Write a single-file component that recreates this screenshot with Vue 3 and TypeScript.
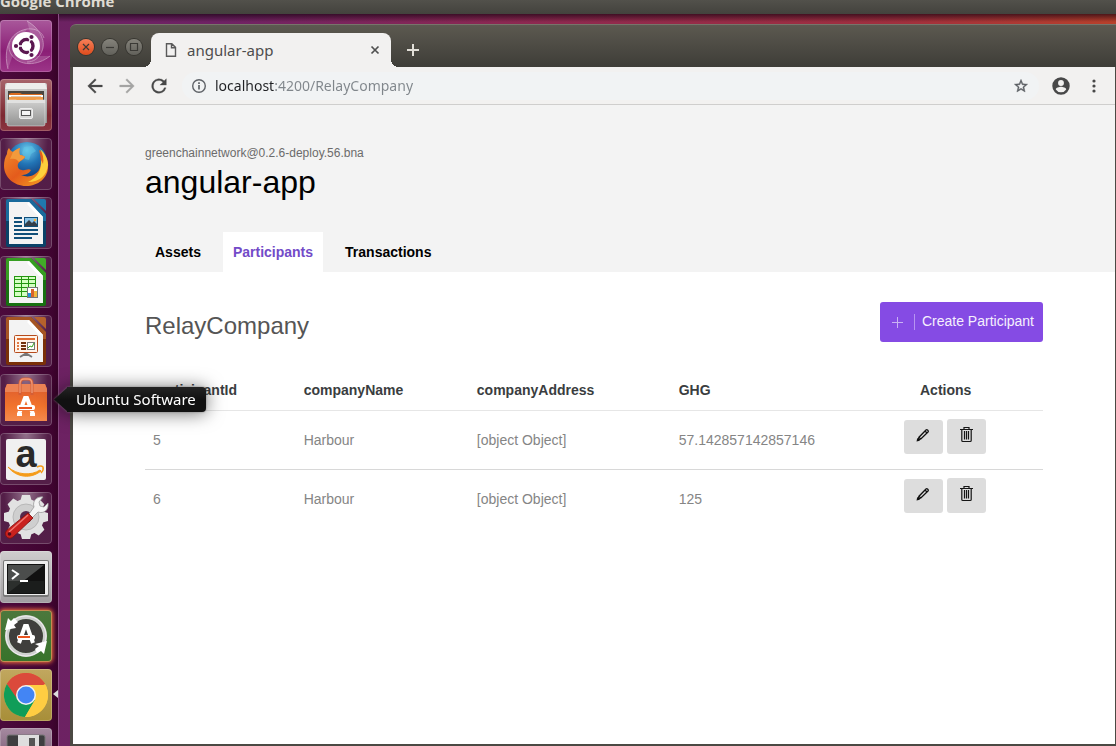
<script setup lang="ts">
import { ref } from 'vue'

interface Company {
  participantId: string
  companyName: string
  companyAddress: string
  ghg: string
}

const launchers = [
  { id: 'dash', label: 'Search your computer' },
  { id: 'files', label: 'Files' },
  { id: 'firefox', label: 'Firefox Web Browser' },
  { id: 'writer', label: 'LibreOffice Writer' },
  { id: 'calc', label: 'LibreOffice Calc' },
  { id: 'impress', label: 'LibreOffice Impress' },
  { id: 'software', label: 'Ubuntu Software' },
  { id: 'amazon', label: 'Amazon' },
  { id: 'settings', label: 'System Settings' },
  { id: 'terminal', label: 'Terminal' },
  { id: 'updater', label: 'Software Updater' },
  { id: 'chrome', label: 'Google Chrome' },
  { id: 'disk', label: 'Floppy Disk' },
]
const hovered = ref('software')
const address = ref('localhost:4200/RelayCompany')
const tabs = ['Assets', 'Participants', 'Transactions']
const activeTab = ref('Participants')
const companies = ref<Company[]>([
  { participantId: '5', companyName: 'Harbour', companyAddress: '[object Object]', ghg: '57.142857142857146' },
  { participantId: '6', companyName: 'Harbour', companyAddress: '[object Object]', ghg: '125' },
])
const documents: Record<string, [string, string]> = {
  writer: ['#1f78ae', '#0a4268'],
  calc: ['#41ad27', '#177010'],
  impress: ['#b5622c', '#7a3008'],
}
const teeth = [0, 45, 90, 135, 180, 225, 270, 315]
</script>

<template>
  <div class="desktop">
    <header class="panel">Google Chrome</header>
    <div class="workspace">
      <nav class="launcher" aria-label="Launcher">
        <div v-for="item in launchers" :key="item.id" class="slot">
          <button type="button" class="tile" :class="item.id" :aria-label="item.label">
            <svg viewBox="0 0 52 52" width="52" height="52" aria-hidden="true">
              <g v-if="item.id === 'dash'">
                <g fill="none" stroke="#fff" stroke-width="1" opacity=".35">
                  <path d="M8 49C3 30 9 12 27 9c9-1 15 3 17 9" />
                  <path d="M27 1c14 8 20 22 14 32-3 6-8 9-14 9" />
                  <path d="M50 36c-12 10-31 11-39-2-2-4-3-8-1-13" />
                </g>
                <path d="M8 49C3 30 9 12 27 9L16 26zM27 1c14 8 20 22 14 32L30 12zM50 36c-12 10-31 11-39-2l22 2z" fill="#fff" opacity=".16" />
                <circle cx="26" cy="26" r="14" fill="#fff" />
                <circle cx="26.500" cy="26" r="6.500" fill="none" stroke="#5b1750" stroke-width="3.400" />
                <path d="M26.500 26H15M26.500 26l6-10M26.500 26l6 10" stroke="#fff" stroke-width="1.400" />
                <g fill="#5b1750" stroke="#fff" stroke-width="1.200">
                  <circle cx="16" cy="26" r="2.700" /><circle cx="31.500" cy="17" r="2.700" /><circle cx="31.500" cy="35" r="2.700" />
                </g>
                <circle cx="26.500" cy="26" r="4.600" fill="#fff" />
              </g>

              <g v-else-if="item.id === 'files'">
                <path d="M5 6q0-2 2-2h38q2 0 2 2v38H5z" fill="url(#steel)" />
                <path d="M5 10l2-6h38l2 6z" fill="#ededeb" />
                <rect x="8" y="12" width="36" height="12" fill="#4b4640" />
                <path d="M9 15l2-1h9l2 1h20v3H9z" fill="#db6c20" />
                <rect x="9" y="16" width="34" height="2" fill="#fff" />
                <rect x="9" y="18" width="34" height="5" fill="#f19c4a" />
                <rect x="11" y="17" width="30" height="1" fill="#d8c8b8" />
                <path d="M7 21h9l3 2h14l3-2h9v24q0 2-2 2H9q-2 0-2-2z" fill="url(#steel)" stroke="#efefef" stroke-width=".5" />
                <path d="M7 21h38v3H7z" fill="#e1e1e0" />
                <rect x="19.500" y="29.500" width="13" height="10" rx="1.500" fill="#d8d8d7" stroke="#eee" />
                <rect x="21.500" y="31.500" width="9" height="5" fill="#f5f5f5" stroke="#555" />
              </g>

              <g v-else-if="item.id === 'firefox'">
                <circle cx="27" cy="24" r="20" fill="url(#globe)" />
                <path d="M24 9l8-1 4 5-5 3-2 6-4-1-3-6z" fill="#60c7e8" opacity=".5" />
                <path d="M7 16c0-3 1-5 2-6 1 2 2 3 4 4 2-2 4-3 7-4-1 3-1 5 0 7 2 0 4 1 5 2-1 3-6 4-7 7-1 3 1 6 4 6 3 1 6-2 9 0-2 4-6 5-10 5 7 3 14 1 18-5 3-5 2-12 0-20 6 4 10 10 9 17 0 11-10 19-22 19S4 39 4 28c0-5 1-9 3-12z" fill="url(#fox)" />
                <path d="M40 11c3 5 4 10 3 15l-2-4c1 10-4 18-13 22 12 0 19-7 20-17 0-6-3-12-8-16z" fill="#ffd93f" opacity=".9" />
                <path d="M13 14c2-2 4-3 7-4-1 3-1 5 0 7 2 0 4 1 5 2-1 2-4 3-6 5-2-3-5-4-9-3z" fill="#f29a3c" />
              </g>

              <g v-else-if="documents[item.id]">
                <path d="M8 2h23l15 15v31q0 2-2 2H8q-2 0-2-2V4q0-2 2-2z" :fill="documents[item.id][1]" />
                <path d="M8 2h23l15 15v7H6V4q0-2 2-2z" :fill="documents[item.id][0]" opacity=".75" />
                <path d="M34 2h10q2 0 2 2v10z" :fill="documents[item.id][0]" />
                <path d="M9 5h20l14 15v27H9z" fill="#f3f3f3" />
                <path d="M29 5l14 15h-4L27 7z" fill="#fff" />
                <g v-if="item.id === 'writer'">
                  <path d="M14 21h8M14 25h8M14 29h8M14 33h24M14 37h24M14 41h18" stroke="#104f79" stroke-width="2" />
                  <rect x="24.500" y="20.500" width="13" height="9" fill="#8ac4e8" stroke="#104f79" />
                  <path d="M25 29v-2l4-4 3 3 2-2 3 3v2z" fill="#343f49" /><circle cx="35" cy="23" r="1.200" fill="#ffb02e" />
                </g>
                <g v-else-if="item.id === 'calc'">
                  <rect x="14" y="20" width="22" height="21" fill="#239610" />
                  <path d="M15 21h6v2h-6zM22 21h6v2h-6zM29 21h6v2h-6zM15 24h6v3h-6zM22 24h6v3h-6zM29 24h6v3h-6zM15 28h6v3h-6zM22 28h6v3h-6zM29 28h6v3h-6zM15 32h6v3h-6zM22 32h6v3h-6zM15 36h6v4h-6zM22 36h6v4h-6z" fill="#d4ffc2" />
                  <rect x="27.500" y="31.500" width="10" height="10" fill="#fff" stroke="#777" />
                  <path d="M28 37h3v4h-3z" fill="#2292dd" /><path d="M31 33h3v8h-3z" fill="#d8632c" /><path d="M34 35h3v6h-3z" fill="#f0b63b" />
                </g>
                <g v-else>
                  <path d="M26 38v3m-6 1l5-3h2l5 3" fill="none" stroke="#777" stroke-width="2" />
                  <rect x="14.500" y="20.500" width="23" height="17" rx="1" fill="#fff3e9" stroke="#b64b1b" />
                  <path d="M17 24h18" stroke="#df6b30" stroke-width="2" />
                  <path d="M17 28h2M17 31h2M17 34h2" stroke="#e17a45" stroke-width="2" />
                  <path d="M21 28h5M21 31h5M21 34h5" stroke="#71300e" stroke-width="2" />
                  <rect x="27.500" y="27.500" width="7" height="7" fill="#fff" stroke="#777" /><path d="M28 33l2-2 2 1 2-4" fill="none" stroke="#31a41d" />
                </g>
              </g>

              <g v-else-if="item.id === 'software'">
                <path d="M7 10h38l2 5v32H5V15z" fill="url(#bag)" />
                <path d="M7 10h38l2 5v3H5v-3z" fill="#ec8355" />
                <path d="M20 21V10q0-5 4-5h4q4 0 4 5v11" fill="none" stroke="#d45e36" stroke-width="3" />
                <path d="M20 19V10q0-5 4-5h4q4 0 4 5v9" fill="none" stroke="#f09a78" stroke-width="1.300" />
                <path d="M19 40l6-16h2l6 16" fill="none" stroke="#fff" stroke-width="4" />
                <rect x="17" y="31" width="18" height="5" rx="2" fill="#fff" /><rect x="19" y="33" width="13" height="2" fill="#e95420" />
                <path d="M17 36h18v1H17z" fill="#ef7a3d" /><path d="M17 39h5v3h-5zM30 39h5v3h-5z" fill="#fff" />
              </g>

              <g v-else-if="item.id === 'amazon'">
                <rect x="6" y="6" width="40" height="41" rx="2" fill="#f0f0f0" />
                <text x="26" y="34" text-anchor="middle" class="amazon-letter">a</text>
                <path d="M8 34c9 8 23 9 32 3l1 1C31 46 17 45 8 34z" fill="#f59b18" stroke="#f59b18" />
                <path d="M37 34q4-2 6 0 1 3-2 6" fill="none" stroke="#f59b18" stroke-width="1.500" />
              </g>

              <g v-else-if="item.id === 'settings'">
                <g fill="#e2e2e2">
                  <path v-for="angle in teeth" :key="angle" d="M20 10l2-7h8l2 7z" :transform="`rotate(${angle} 26 25)`" />
                  <circle cx="26" cy="25" r="18" />
                </g>
                <circle cx="26" cy="25" r="13" fill="#cfcfcf" stroke="#b8b8b8" /><circle cx="26" cy="25" r="6" fill="#55284c" />
                <path d="M29 22l5-7c-2-6 3-11 9-10l-4 5 1 4 4 1 4-4c1 7-4 11-10 9l-6 6z" fill="#f4f4f4" stroke="#999" stroke-width=".8" />
                <path d="M28 21l5 5L13 45q-4 3-7-1-2-3 1-6z" fill="#c9211e" stroke="#7f0f0e" stroke-width=".8" />
                <path d="M28 23L9 40" stroke="#f07670" stroke-width="1.500" /><circle cx="9.500" cy="42" r="1.800" fill="#4e0d1c" />
              </g>

              <g v-else-if="item.id === 'terminal'">
                <rect x="3" y="9" width="46" height="37" rx="2" fill="#777" /><rect x="4" y="10" width="44" height="34" rx="1" fill="#eee" />
                <rect x="7" y="13" width="38" height="30" fill="#111" /><path d="M8 14h36L8 42z" fill="#4b4d4c" /><path d="M8 30h36v12H8z" fill="#202221" opacity=".7" />
                <path d="M12 19l6 4-6 5" fill="none" stroke="#fff" stroke-width="2" /><path d="M20 30h8" stroke="#fff" stroke-width="2" />
              </g>

              <g v-else-if="item.id === 'updater'">
                <circle cx="26" cy="26" r="17" fill="#3f3e3c" />
                <circle cx="26" cy="26" r="19" fill="none" stroke="#d0d0d0" stroke-width="4" />
                <circle cx="26" cy="26" r="20" fill="none" stroke="#f0f0f0" stroke-width="1" />
                <path d="M5 20l3-12 3 3 3-3 4 4-4 3 2 3zM47 31l-3 13-3-3-4 2-2-4 4-3-4-2z" fill="#fff" />
                <path d="M19 33l6-17h2l6 17" fill="none" stroke="#fff" stroke-width="4" /><rect x="17" y="25" width="18" height="5" rx="2" fill="#fff" /><rect x="18" y="26" width="12" height="2" fill="#e95420" />
              </g>

              <g v-else-if="item.id === 'chrome'">
                <circle cx="26" cy="26" r="22" fill="#ffcd42" />
                <path d="M26 26L6.900 15A22 22 0 0 1 45 15z" fill="#db4a3b" /><path d="M26 15h19a22 22 0 0 0-38.100 0L16 31z" fill="#db4a3b" />
                <path d="M6.900 15A22 22 0 0 0 25 48l10-17-17 0z" fill="#109d58" />
                <path d="M26 16h19.600A22 22 0 0 1 25 48l10-17z" fill="#ffcd42" />
                <circle cx="26" cy="26" r="10" fill="#f1f1f1" /><circle cx="26" cy="26" r="8.500" fill="#4385f4" />
              </g>

              <g v-else>
                <rect x="7" y="7" width="38" height="40" rx="2" fill="#3e3e40" stroke="#777" /><rect x="18" y="7" width="21" height="16" fill="#dedede" /><rect x="29" y="10" width="6" height="10" fill="#555" />
              </g>
            </svg>
          </button>
          <span v-if="item.id === 'chrome'" class="running"></span>
          <span v-if="item.id === hovered" class="tooltip" role="tooltip">{{ item.label }}</span>
        </div>
      </nav>

      <section class="window" aria-label="Google Chrome window">
        <div class="titlebar">
          <div class="controls">
            <button type="button" class="control close" aria-label="Close window"><svg viewBox="0 0 16 16"><path d="M5 5l6 6M11 5l-6 6" /></svg></button>
            <button type="button" class="control" aria-label="Minimize window"><svg viewBox="0 0 16 16"><path d="M4 8.500h8" /></svg></button>
            <button type="button" class="control" aria-label="Maximize window"><svg viewBox="0 0 16 16"><path d="M4.500 4.500h7v7h-7z" /></svg></button>
          </div>
          <div class="browser-tab">
            <svg class="page-icon" viewBox="0 0 12 14" width="12" height="14"><path d="M1.500.7h5.300l3.700 3.700v8.900h-9zM6.500.7v4h4" fill="none" stroke="#5a5a5a" stroke-width="1.400" /></svg>
            <span class="tab-title">angular-app</span>
            <button type="button" class="icon-button" aria-label="Close tab"><svg viewBox="0 0 10 10" width="10" height="10"><path d="M1.500 1.500l7 7m0-7l-7 7" stroke="#505050" stroke-width="1.700" /></svg></button>
          </div>
          <button type="button" class="icon-button new-tab" aria-label="New tab"><svg viewBox="0 0 12 12" width="12" height="12"><path d="M6 0v12M0 6h12" stroke="#e2dfd8" stroke-width="2" /></svg></button>
        </div>

        <div class="browser-body">
          <div class="toolbar">
            <div class="history">
              <button type="button" class="icon-button" aria-label="Back"><svg viewBox="0 0 24 24" width="22" height="22"><path d="M20 11H7.830l5.590-5.590L12 4l-8 8 8 8 1.410-1.410L7.830 13H20z" fill="#484848" stroke="#484848" stroke-width=".3" /></svg></button>
              <button type="button" class="icon-button" aria-label="Forward"><svg viewBox="0 0 24 24" width="22" height="22"><path d="M12 4l-1.410 1.410L16.170 11H4v2h12.170l-5.580 5.590L12 20l8-8z" fill="#a4a4a3" stroke="#a4a4a3" stroke-width=".3" /></svg></button>
              <button type="button" class="icon-button" aria-label="Reload"><svg viewBox="0 0 24 24" width="22" height="22"><path d="M17.650 6.350A8 8 0 1 0 19.730 14h-2.080A6 6 0 1 1 12 6c1.660 0 3.140.69 4.220 1.780L13 11h7V4z" fill="#484848" stroke="#484848" stroke-width=".3" /></svg></button>
            </div>
            <div class="omnibox">
              <svg viewBox="0 0 16 16" width="16" height="16"><circle cx="8" cy="8" r="6.300" fill="none" stroke="#5f6368" stroke-width="1.400" /><path d="M8 7v4.500M8 4.300v1.600" stroke="#5f6368" stroke-width="1.700" /></svg>
              <input v-model="address" class="address" type="text" aria-label="Address" spellcheck="false" />
              <button type="button" class="icon-button" aria-label="Bookmark this page"><svg viewBox="0 0 24 24" width="16" height="16"><path d="M22 9.240l-7.190-.62L12 2 9.190 8.630 2 9.240l5.460 4.730L5.820 21 12 17.270 18.180 21l-1.630-7.030zM12 15.400l-3.760 2.270 1-4.280-3.320-2.880 4.380-.38L12 6.100l1.710 4.040 4.380.38-3.320 2.880 1 4.280z" fill="#5a5e63" stroke="#5a5e63" stroke-width=".6" /></svg></button>
            </div>
            <button type="button" class="icon-button" aria-label="Profile"><svg viewBox="0 0 24 24" width="22" height="22"><path d="M12 2.500a9.500 9.500 0 1 0 0 19 9.500 9.500 0 0 0 0-19zm0 3a3.200 3.200 0 1 1 0 6.400 3.200 3.200 0 0 1 0-6.400zm0 13.300a6.900 6.900 0 0 1-5.700-3.100c0-1.900 3.800-2.900 5.700-2.900s5.700 1 5.700 2.900a6.900 6.900 0 0 1-5.700 3.100z" fill="#484848" /></svg></button>
            <button type="button" class="icon-button menu" aria-label="Menu"><svg viewBox="0 0 4 14" width="4" height="14"><g fill="#484848"><circle cx="2" cy="2" r="1.600" /><circle cx="2" cy="7" r="1.600" /><circle cx="2" cy="12" r="1.600" /></g></svg></button>
          </div>

          <div class="page">
            <header class="page-header">
              <p class="network">greenchainnetwork@0.2.6-deploy.56.bna</p>
              <h1>angular-app</h1>
              <nav class="page-tabs">
                <a v-for="tab in tabs" :key="tab" href="#" :class="{ active: tab === activeTab }" @click.prevent="activeTab = tab">{{ tab }}</a>
              </nav>
            </header>
            <main>
              <div class="heading">
                <h2>RelayCompany</h2>
                <button type="button" class="create">
                  <svg viewBox="0 0 23 20" width="23" height="20"><path d="M0 11.500h11M5.500 6v11" stroke="#c9b2f3" /><path d="M22.500 3v16" stroke="#b794f1" /></svg>
                  <span>Create Participant</span>
                </button>
              </div>
              <table>
                <thead>
                  <tr>
                    <th class="col-id">participantId</th>
                    <th class="col-name">companyName</th>
                    <th class="col-address">companyAddress</th>
                    <th class="col-ghg">GHG</th>
                    <th class="actions">Actions</th>
                  </tr>
                </thead>
                <tbody>
                  <tr v-for="company in companies" :key="company.participantId">
                    <td>{{ company.participantId }}</td>
                    <td>{{ company.companyName }}</td>
                    <td>{{ company.companyAddress }}</td>
                    <td>{{ company.ghg }}</td>
                    <td class="actions">
                      <div class="buttons">
                        <button type="button" class="edit" aria-label="Edit"><svg viewBox="0 0 14 14" width="14" height="14"><path d="M2 12l1-2.800L10 2q.7-.7 1.500 0l.5.500q.7.700 0 1.500L4.800 11zM3 9.200l1.900 1.900M9 3l2 2" fill="none" stroke="#111" stroke-width="1.300" /><path d="M.5 13.500l.8-3.500 2.700 2.700z" fill="#111" /></svg></button>
                        <button type="button" class="delete" aria-label="Delete"><svg viewBox="0 0 13 17" width="13" height="17"><path d="M0 3.500h13M4 3V1.500h5V3M1.800 4v10.500q0 1 1 1h7.400q1 0 1-1V4M4.500 5v8.500M6.500 5v8.500M8.500 5v8.500" fill="none" stroke="#151515" stroke-width="1.200" /></svg></button>
                      </div>
                    </td>
                  </tr>
                </tbody>
              </table>
            </main>
          </div>
        </div>
      </section>
    </div>

    <svg class="paints" width="0" height="0" aria-hidden="true">
      <defs>
        <linearGradient id="steel" x1="0" y1="0" x2="0" y2="1"><stop stop-color="#d0d0cf" /><stop offset="1" stop-color="#929291" /></linearGradient>
        <linearGradient id="fox" x1="0" y1="0" x2="1" y2="1"><stop stop-color="#f08c2b" /><stop offset=".5" stop-color="#e45b1c" /><stop offset="1" stop-color="#f6a622" /></linearGradient>
        <radialGradient id="globe" cx=".5" cy=".2" r=".7"><stop stop-color="#6cc9ec" /><stop offset=".5" stop-color="#2274b5" /><stop offset="1" stop-color="#123b7b" /></radialGradient>
        <linearGradient id="bag" x1="0" y1="0" x2="0" y2="1"><stop stop-color="#dc5a2d" /><stop offset=".6" stop-color="#f2742d" /><stop offset="1" stop-color="#f48a4e" /></linearGradient>
      </defs>
    </svg>
  </div>
</template>

<style>
body {
  margin: 0;
  overflow: hidden;
}
</style>

<style scoped>
.desktop {
  display: flex;
  flex-direction: column;
  height: 100vh;
  overflow: hidden;
  font-family: "Noto Sans", "Open Sans", sans-serif;
  background: linear-gradient(90deg, #6c2262 0, #6f2264 20%, #8b2852 45%, #a02f3e 80%, #b7402b 100%);
}
.panel {
  display: flex;
  flex: none;
  align-items: flex-end;
  box-sizing: border-box;
  height: 14px;
  padding-bottom: 3px;
  overflow: hidden;
  color: #dfdbd2;
  background: linear-gradient(#52514b, #43423d);
  font-family: "Open Sans", "Noto Sans", sans-serif;
  font-size: 15px;
  font-weight: 700;
  line-height: 20px;
}
.workspace {
  display: flex;
  flex: 1;
  min-height: 0;
  background: linear-gradient(rgba(20, 0, 15, .65), transparent 8px);
}
.launcher {
  position: relative;
  z-index: 2;
  display: flex;
  flex: none;
  flex-direction: column;
  gap: 7px;
  box-sizing: border-box;
  width: 59px;
  padding-top: 6px;
  border-right: 1px solid #8b4c84;
  background: linear-gradient(90deg, #4c0a3c, #3f0430 90%, #380329);
}
.slot {
  position: relative;
  flex: none;
  height: 52px;
}
button {
  font: inherit;
  cursor: pointer;
}
.tile {
  display: block;
  box-sizing: border-box;
  width: 52px;
  height: 52px;
  padding: 0;
  border: 0;
  border-radius: 4px;
  box-shadow: inset 0 0 0 1px rgba(255, 255, 255, .2);
  background: radial-gradient(ellipse at 50% 0, rgba(255, 255, 255, .42), rgba(255, 255, 255, .08) 60%), #450b38;
}
.tile svg {
  display: block;
  overflow: visible;
}
.tile.dash {
  background: linear-gradient(#a9589b, #8b1f76 60%, #9c3588);
}
.tile.files {
  background: linear-gradient(#a8646b, #7d2932 70%, #8b3540);
}
.tile.terminal {
  background: linear-gradient(#cfcdce, #a09da0);
}
.tile.updater {
  box-shadow: inset 0 0 0 1px #c88950, 0 0 4px 1px #ee6d3d;
  background: linear-gradient(#4c783d, #37732b);
}
.tile.chrome {
  background: linear-gradient(#c1a75f, #a78e38);
}
.tile.disk {
  background: linear-gradient(#a58aa0, #62405c);
}
.amazon-letter {
  fill: #292929;
  font: 700 38px "Liberation Sans", Arial, sans-serif;
}
.running {
  position: absolute;
  top: 21px;
  right: 0;
  border: 4px solid transparent;
  border-right: 5px solid #ddd;
  border-left: 0;
}
.tooltip {
  position: absolute;
  top: 13px;
  left: 67px;
  padding: 0 10px 0 9px;
  border-radius: 0 4px 4px 0;
  color: #fff;
  background: linear-gradient(#242424, #111 50%);
  filter: drop-shadow(0 0 1px rgba(120, 120, 120, .8)) drop-shadow(0 1px 9px rgba(0, 0, 0, .55));
  font-size: 15px;
  line-height: 25px;
  white-space: nowrap;
}
.tooltip::before {
  position: absolute;
  top: 0;
  left: -13px;
  width: 14px;
  height: 25px;
  background: linear-gradient(#242424, #111 50%);
  clip-path: polygon(0 50%, 100% 0, 100% 100%);
  content: "";
}
.window {
  display: flex;
  flex: 1;
  flex-direction: column;
  min-width: 0;
  margin: 10px 0 0 11px;
}
.titlebar {
  display: flex;
  flex: none;
  box-sizing: border-box;
  height: 43px;
  padding-left: 8px;
  border-top: 1px solid #77746b;
  border-radius: 6px 0 0;
  background: linear-gradient(#5c5950, #3e3d38);
}
.controls {
  display: flex;
  gap: 8px;
  padding: 14px 9px 0 0;
}
.control {
  width: 16px;
  height: 16px;
  padding: 0;
  border: 0;
  border-radius: 50%;
  box-shadow: 0 0 0 1px #373631;
  background: linear-gradient(#85837b, #62615b);
}
.control svg {
  display: block;
  fill: none;
  stroke: #3b3a36;
  stroke-width: 1.2px;
}
.control.close {
  background: linear-gradient(#f68059, #df4b1c);
}
.browser-tab {
  position: relative;
  display: flex;
  align-items: center;
  box-sizing: border-box;
  width: 240px;
  height: 34px;
  margin-top: 8px;
  padding: 0 11px 0 14px;
  border-radius: 8px 8px 0 0;
  background: #f2f1f0;
}
.browser-tab::before,
.browser-tab::after {
  position: absolute;
  bottom: 0;
  width: 8px;
  height: 8px;
  content: "";
}
.browser-tab::before {
  right: 100%;
  background: radial-gradient(circle at 0 0, transparent 8px, #f2f1f0 8px);
}
.browser-tab::after {
  left: 100%;
  background: radial-gradient(circle at 100% 0, transparent 8px, #f2f1f0 8px);
}
.tab-title {
  flex: 1;
  margin-left: 10px;
  color: #4d4d4d;
  font-size: 15px;
  line-height: 20px;
}
.icon-button {
  display: flex;
  align-items: center;
  justify-content: center;
  padding: 0;
  border: 0;
  background: none;
}
.new-tab {
  margin: 8px 0 0 16px;
}
.browser-body {
  display: flex;
  flex: 1;
  flex-direction: column;
  min-height: 0;
  border: solid #4b4943;
  border-width: 0 1px 2px 3px;
}
.toolbar {
  display: flex;
  flex: none;
  align-items: center;
  box-sizing: border-box;
  height: 38px;
  padding: 0 19px 0 11px;
  border-bottom: 1px solid #cfcecd;
  background: #f2f1f0;
}
.history {
  display: flex;
  gap: 10px;
  margin-right: 12px;
}
.omnibox {
  display: flex;
  flex: 1;
  align-items: center;
  height: 28px;
  margin-right: 11px;
  padding: 0 10px 0 9px;
  border-radius: 14px;
  background: #f1f3f4;
}
.address {
  flex: 1;
  min-width: 0;
  margin-left: 8px;
  padding: 0;
  border: 0;
  outline: 0;
  background: linear-gradient(90deg, #202124 59px, #80868b 59px) text;
  color: transparent;
  font: 14px/20px "Noto Sans", "Open Sans", sans-serif;
}
.menu {
  margin-left: 20px;
}
.page {
  flex: 1;
  min-height: 0;
  overflow: hidden;
  background: #fff;
  font-family: "Liberation Sans", Arial, sans-serif;
  font-size: 14px;
}
.page-header {
  padding: 40px 72px 0;
  background: #f3f3f3;
}
.network {
  margin: 0;
  color: #6b6b6b;
  font-size: 12px;
  line-height: 16px;
}
h1 {
  margin: 1px 0 30px;
  color: #000;
  font-size: 32px;
  font-weight: 400;
  line-height: 40px;
}
.page-tabs {
  display: flex;
  gap: 12px;
}
.page-tabs a {
  padding: 0 10px;
  color: #000;
  font-weight: 700;
  line-height: 40px;
  text-decoration: none;
}
.page-tabs a.active {
  color: #734bc8;
  background: #fff;
}
main {
  padding: 30px 72px;
}
.heading {
  display: flex;
  align-items: center;
  justify-content: space-between;
}
h2 {
  margin: 8px 0 0;
  color: #555;
  font-size: 24px;
  font-weight: 400;
  line-height: 32px;
}
.create {
  display: flex;
  align-items: center;
  height: 40px;
  padding: 0 9px 2px 12px;
  border: 0;
  border-radius: 3px;
  color: #f5f0fd;
  background: #854be4;
}
.create svg {
  margin-right: 7px;
}
table {
  width: 100%;
  margin-top: 28px;
  border-collapse: separate;
  border-spacing: 0;
  table-layout: fixed;
}
th,
td {
  padding: 0 8px;
  text-align: left;
}
th {
  height: 40px;
  border-bottom: 1px solid #e6e6e6;
  color: #3a3d40;
}
td {
  height: 58px;
  border-bottom: 1px solid #d8d8d8;
  color: #858585;
}
tbody tr:last-child td {
  border-bottom: 0;
}
.col-id {
  width: 15%;
}
.col-name {
  width: 17.5%;
}
.col-address {
  width: 20.7%;
}
.col-ghg {
  width: 18%;
}
.actions {
  text-align: center;
}
.buttons {
  display: flex;
  align-items: flex-end;
  justify-content: center;
  gap: 4px;
  padding: 0 2px 7px 0;
}
.buttons button {
  display: flex;
  align-items: center;
  justify-content: center;
  width: 39px;
  height: 34px;
  padding: 0 0 4px;
  border: 0;
  border-radius: 3px;
  background: #ddd;
}
.buttons .delete {
  height: 35px;
}
.paints {
  position: absolute;
}
</style>
